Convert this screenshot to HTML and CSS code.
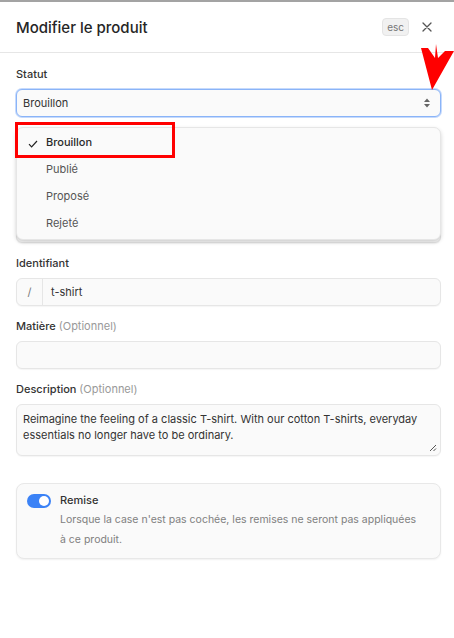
FILE: index.html
```html
<!DOCTYPE html>
<html lang="fr">
<head>
  <meta charset="UTF-8">
  <meta name="viewport" content="width=device-width, initial-scale=1.0">
  <title>Modifier le produit</title>
  <link rel="stylesheet" href="styles.css">
</head>
<body>
  <div class="panel">
    <header class="panel-header">
      <h1>Modifier le produit</h1>
      <div class="header-actions">
        <span class="kbd">esc</span>
        <svg class="close" width="10" height="10" viewBox="0 0 10 10"><path d="M1 1L9 9M9 1L1 9" stroke="#555" stroke-width="1.3" stroke-linecap="round"/></svg>
      </div>
    </header>

    <div class="panel-body">
      <div class="field">
        <label>Statut</label>
        <div class="select focused">
          <span>Brouillon</span>
          <svg width="8" height="12" viewBox="0 0 8 12"><path d="M4 1.5L7 5H1Z M4 10.5L1 7H7Z" fill="#666"/></svg>
        </div>
      </div>

      <!-- fields hidden under the open menu -->
      <div class="field">
        <label></label>
        <div class="input"></div>
      </div>

      <div class="field">
        <label></label>
        <div class="input"></div>
      </div>

      <div class="field">
        <label>Identifiant</label>
        <div class="input prefixed">
          <span class="prefix">/</span>
          <span class="value">t-shirt</span>
        </div>
      </div>

      <div class="field">
        <label>Matière <span class="optional">(Optionnel)</span></label>
        <div class="input"></div>
      </div>

      <div class="field">
        <label>Description <span class="optional">(Optionnel)</span></label>
        <div class="textarea">
          Reimagine the feeling of a classic T-shirt. With our cotton T-shirts, everyday essentials no longer have to be ordinary.
          <svg class="grip" width="8" height="8" viewBox="0 0 8 8"><path d="M7 1L1 7M7 4.5L4.5 7" stroke="#555" stroke-width="1"/></svg>
        </div>
      </div>

      <div class="switch-card">
        <span class="toggle"><span class="knob"></span></span>
        <div class="switch-text">
          <div class="switch-title">Remise</div>
          <div class="switch-hint">Lorsque la case n'est pas cochée, les remises ne seront pas appliquées à ce produit.</div>
        </div>
      </div>
    </div>

    <ul class="dropdown">
      <li class="selected">
        <svg class="check" width="10" height="8" viewBox="0 0 10 8"><path d="M1 4.2L3.6 6.8L9 1" fill="none" stroke="#222" stroke-width="1.2"/></svg>
        Brouillon
      </li>
      <li>Publié</li>
      <li>Proposé</li>
      <li>Rejeté</li>
    </ul>

    <div class="highlight"></div>
    <svg class="pointer" width="34" height="48" viewBox="0 0 34 48">
      <path d="M0 6L7 6L14 16L15 2L17 16L24 9L33 9L11 48Z" fill="#f00"/>
    </svg>
  </div>
</body>
</html>
```

FILE: styles.css
```css
* {
  box-sizing: border-box;
}
body {
  margin: 0;
  background: #fff;
  font-family: Inter, "Noto Sans", sans-serif;
  color: #2b2b2b;
}
.panel {
  position: relative;
  border-top: 2px solid #a3a3a3;
  min-height: 638px;
}
.panel-header {
  display: flex;
  align-items: center;
  justify-content: space-between;
  height: 51px;
  padding: 0 22px 0 16px;
  border-bottom: 1px solid #e6e6e6;
}
.panel-header h1 {
  margin: 0;
  font-size: 15px;
  font-weight: 500;
  color: #262626;
}
.header-actions {
  display: flex;
  align-items: center;
  gap: 13px;
}
.kbd {
  font-size: 10px;
  color: #777;
  background: #f1f1f1;
  border: 1px solid #e4e4e4;
  border-radius: 4px;
  padding: 2px 4px;
  line-height: 12px;
}
.panel-body {
  padding: 14px 13px 20px 16px;
  display: flex;
  flex-direction: column;
  gap: 13px;
}
.field label {
  display: block;
  height: 14px;
  font-size: 11px;
  line-height: 14px;
  margin-bottom: 8px;
  font-weight: 500;
  color: #333;
}
.optional {
  font-weight: 400;
  color: #999;
}
.select,
.input {
  height: 28px;
  border: 1px solid #e6e6e6;
  border-radius: 6px;
  background: #fafafa;
  font-size: 11px;
  color: #333;
  display: flex;
  align-items: center;
  padding: 0 6px;
  box-shadow: 0 1px 1px rgba(0, 0, 0, 0.04);
}
.select {
  justify-content: space-between;
  padding-right: 9px;
}
.select.focused {
  border-color: #8ab4f8;
  box-shadow: 0 0 0 1px #c6dafc;
}
.prefixed {
  padding: 0;
}
.prefix {
  width: 26px;
  height: 100%;
  display: flex;
  align-items: center;
  justify-content: center;
  border-right: 1px solid #e6e6e6;
  color: #777;
}
.value {
  padding-left: 8px;
}
.textarea {
  position: relative;
  height: 52px;
  border: 1px solid #e6e6e6;
  border-radius: 6px;
  background: #fafafa;
  font-size: 11px;
  line-height: 16px;
  color: #333;
  padding: 6px 6px;
  box-shadow: 0 1px 1px rgba(0, 0, 0, 0.04);
}
.grip {
  position: absolute;
  right: 3px;
  bottom: 3px;
}
.switch-card {
  margin-top: 14px;
  display: flex;
  gap: 9px;
  padding: 8px 18px 8px 10px;
  border: 1px solid #e8e8e8;
  border-radius: 8px;
  background: #fafafa;
  box-shadow: 0 1px 2px rgba(0, 0, 0, 0.06);
}
.toggle {
  flex: none;
  width: 24px;
  height: 14px;
  margin-top: 2px;
  border-radius: 7px;
  background: #3b82f6;
  display: flex;
  align-items: center;
  justify-content: flex-end;
  padding: 0 2px;
}
.knob {
  width: 10px;
  height: 10px;
  border-radius: 50%;
  background: #fff;
}
.switch-title {
  font-size: 11px;
  font-weight: 500;
  line-height: 16px;
  color: #333;
}
.switch-hint {
  font-size: 10.5px;
  line-height: 20px;
  color: #808080;
  margin-top: 2px;
}
.dropdown {
  position: absolute;
  top: 125px;
  left: 16px;
  right: 13px;
  margin: 0;
  padding: 1px 0 3px;
  list-style: none;
  background: #fafafa;
  border: 1px solid #e6e6e6;
  border-radius: 7px;
  box-shadow: 0 2px 4px rgba(0, 0, 0, 0.18);
}
.dropdown li {
  position: relative;
  height: 26.8px;
  display: flex;
  align-items: center;
  padding-left: 29px;
  font-size: 11px;
  color: #555;
}
.dropdown li.selected {
  font-weight: 500;
  color: #2b2b2b;
}
.check {
  position: absolute;
  left: 11px;
  top: 11px;
}
.highlight {
  position: absolute;
  top: 120px;
  left: 15px;
  width: 160px;
  height: 36px;
  border: 3px solid #f00;
}
.pointer {
  position: absolute;
  top: 40px;
  left: 421px;
}
```
